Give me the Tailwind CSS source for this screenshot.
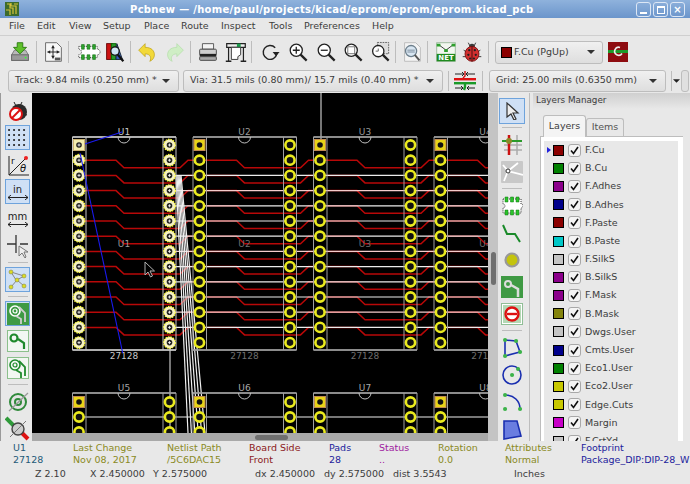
<!DOCTYPE html>
<html lang="en">

<head>
  <meta charset="UTF-8">
  <title>Pcbnew</title>
  <script src="https://cdn.jsdelivr.net/npm/@tailwindcss/browser@4"></script>
</head>

<body>
  <div class="flex flex-col w-[690px] h-[484px] overflow-hidden bg-[#e8e8e8] text-[9.5px] text-[#3c3c3c] font-['DejaVu_Sans',sans-serif]">

    <!-- title bar -->
    <div class="relative flex h-[18px] shrink-0 items-center bg-gradient-to-b from-[#8fb2dc] to-[#6b95cb]">
      <svg class="ml-[5px] size-[14px]" viewBox="0 0 14 14">
        <rect width="14" height="14" fill="#3d6b2c" />
        <path d="M2 2h3v4h3v6M6 1v3h5v8M1 8h4v5M9 2h4" stroke="#d8c43a" stroke-width="1.2" fill="none" />
      </svg>
      <div class="ml-[111px] text-[10px] font-bold tracking-[0.3px] text-white">Pcbnew — /home/paul/projects/kicad/eprom/eprom/eprom.kicad_pcb</div>
      <div class="absolute right-[5px] top-[2px] flex gap-[2px]">
        <div class="flex size-[15px] items-end justify-center rounded-[3px] border border-[#dce7f5] pb-[2px]"><div class="h-[2px] w-[7px] bg-white"></div></div>
        <div class="flex size-[15px] items-center justify-center rounded-[3px] border border-[#dce7f5]"><div class="size-[8px] border border-t-2 border-white"></div></div>
        <div class="flex size-[15px] items-center justify-center rounded-[3px] border border-[#dce7f5] text-[10px] font-bold leading-none text-white">×</div>
      </div>
    </div>

    <!-- menu bar -->
    <div class="flex h-[18px] shrink-0 items-center border-b border-[#cfcfcf] pl-[9px]">
      <span class="w-[28px]">File</span>
      <span class="w-[32px]">Edit</span>
      <span class="w-[34px]">View</span>
      <span class="w-[41px]">Setup</span>
      <span class="w-[37px]">Place</span>
      <span class="w-[40px]">Route</span>
      <span class="w-[48px]">Inspect</span>
      <span class="w-[35px]">Tools</span>
      <span class="w-[68px]">Preferences</span>
      <span>Help</span>
    </div>

    <!-- main toolbar -->
    <div class="flex h-[32px] shrink-0 items-center pl-[7px]">
      <!-- save -->
      <svg class="size-[26px] shrink-0" viewBox="-2 -2 28 28">
        <path d="M3 15l3-5h12l3 5v6H3z" fill="#b8b8b8" stroke="#777" />
        <rect x="3" y="15" width="18" height="6" fill="#9a9a9a" stroke="#666" />
        <circle cx="18" cy="18" r="1" fill="#3f3" />
        <path d="M9 2h6v5h4l-7 7-7-7h4z" fill="#5fc02a" stroke="#2c7a12" />
      </svg>
      <div class="mx-[3px] h-[22px] w-px shrink-0 bg-[#bdbdbd]"></div>
      <!-- page settings -->
      <svg class="size-[26px] shrink-0" viewBox="-2 -2 28 28">
        <path d="M4 2h12l5 5v15H4z" fill="#f7f7f7" stroke="#666" />
        <path d="M12 5v14M6 12h13" stroke="#222" />
        <path d="M12 5l-2 3h4zM12 19l-2-3h4zM6 12l3-2v4zM19 12l-3-2v4z" fill="#222" />
        <rect x="14" y="18" width="6" height="3" fill="#555" />
      </svg>
      <div class="mx-[2px] h-[22px] w-px shrink-0 bg-[#bdbdbd]"></div>
      <!-- footprint editor -->
      <svg class="ml-[4px] size-[26px] shrink-0" viewBox="-2 -2 28 28">
        <path d="M2 6h20v3a3 3 0 0 1 0 6v3H2v-3a3 3 0 0 0 0-6z" fill="#fff" stroke="#333" stroke-dasharray="1 1" />
        <path d="M5 4h3v5H5zM11 4h3v5h-3zM17 4h3v5h-3zM5 15h3v5H5zM11 15h3v5h-3zM17 15h3v5h-3z" fill="#2fa52f" stroke="#116a11" stroke-width=".6" />
      </svg>
      <!-- footprint browser -->
      <svg class="ml-[1px] size-[26px] shrink-0" viewBox="-2 -2 28 28">
        <rect x="3" y="3" width="6" height="17" fill="#c11" stroke="#600" />
        <rect x="8" y="3" width="5" height="17" fill="#2a9a2a" stroke="#060" />
        <path d="M14 3l6 17h-7z" fill="#3a5fbf" stroke="#123" />
        <circle cx="12" cy="11" r="4.5" fill="#cfe6f5" stroke="#111" stroke-width="1.3" />
        <path d="M15 15l6 7" stroke="#111" stroke-width="2.4" />
      </svg>
      <div class="mx-[2px] h-[22px] w-px shrink-0 bg-[#bdbdbd]"></div>
      <!-- undo -->
      <svg class="ml-[1px] size-[26px] shrink-0" viewBox="-2 -2 28 28">
        <path d="M3 10l7-7v4c7 0 10 4 10 8 0 3-2 6-5 7 2-3 1-8-5-8v3z" fill="#f2d93a" stroke="#b89a10" stroke-width=".7" />
      </svg>
      <!-- redo -->
      <svg class="ml-[2px] size-[26px] shrink-0" viewBox="-2 -2 28 28">
        <path d="M21 10l-7-7v4C7 7 4 11 4 15c0 3 2 6 5 7-2-3-1-8 5-8v3z" fill="#cfeec5" stroke="#b0dca6" stroke-width=".7" />
      </svg>
      <div class="mx-[2px] h-[22px] w-px shrink-0 bg-[#bdbdbd]"></div>
      <!-- print -->
      <svg class="ml-[2px] size-[26px] shrink-0" viewBox="-2 -2 28 28">
        <path d="M6 3h12v6H6z" fill="#f4f4f4" stroke="#555" />
        <rect x="3" y="9" width="18" height="6" rx="1" fill="#cfcfcf" stroke="#444" />
        <rect x="3" y="14" width="18" height="3" fill="#222" />
        <rect x="3" y="17" width="18" height="4" rx="1" fill="#aaa" stroke="#444" />
      </svg>
      <!-- plot -->
      <svg class="ml-[2px] size-[26px] shrink-0" viewBox="-2 -2 28 28">
        <path d="M2 3h20v4H2zM4 7v15M20 7v15" fill="#eee" stroke="#222" stroke-width="1.3" />
        <rect x="13" y="3" width="4" height="4" fill="#1a9a4a" />
        <path d="M7 7h10v8l-3 2v3H7z" fill="#fff" stroke="#333" />
        <path d="M1 22h6M17 22h6" stroke="#222" stroke-width="1.5" />
      </svg>
      <div class="mx-[2px] h-[22px] w-px shrink-0 bg-[#bdbdbd]"></div>
      <!-- redraw -->
      <svg class="ml-[3px] size-[26px] shrink-0" viewBox="-3 -3 30 30">
        <path d="M18 7a8 8 0 1 0 2 7" fill="none" stroke="#222" stroke-width="1.6" />
        <path d="M15 12h8l-4 5z" fill="#222" />
      </svg>
      <!-- zoom in -->
      <svg class="ml-[2px] size-[26px] shrink-0" viewBox="-3 -3 30 30">
        <circle cx="10" cy="10" r="7" fill="#fff" stroke="#222" stroke-width="1.5" />
        <path d="M6 10h8M10 6v8" stroke="#222" stroke-width="1.5" />
        <path d="M15 15l7 7" stroke="#222" stroke-width="2.6" />
      </svg>
      <!-- zoom out -->
      <svg class="ml-[2px] size-[26px] shrink-0" viewBox="-3 -3 30 30">
        <circle cx="10" cy="10" r="7" fill="#fff" stroke="#222" stroke-width="1.5" />
        <path d="M6 10h8" stroke="#222" stroke-width="1.5" />
        <path d="M15 15l7 7" stroke="#222" stroke-width="2.6" />
      </svg>
      <!-- zoom fit -->
      <svg class="ml-[1px] size-[26px] shrink-0" viewBox="-3 -3 30 30">
        <circle cx="10" cy="10" r="7" fill="#fff" stroke="#222" stroke-width="1.5" />
        <rect x="6" y="6" width="8" height="8" fill="none" stroke="#666" />
        <path d="M15 15l7 7" stroke="#222" stroke-width="2.6" />
      </svg>
      <!-- zoom area -->
      <svg class="ml-[1px] size-[26px] shrink-0" viewBox="-3 -3 30 30">
        <rect x="9" y="1" width="13" height="13" fill="#ddd" stroke="#555" stroke-dasharray="2 1" />
        <circle cx="10" cy="11" r="6.5" fill="#fff" stroke="#222" stroke-width="1.5" />
        <path d="M7 11h3V8" fill="none" stroke="#555" />
        <path d="M15 15l7 7" stroke="#222" stroke-width="2.6" />
      </svg>
      <div class="mx-[2px] h-[22px] w-px shrink-0 bg-[#bdbdbd]"></div>
      <!-- find -->
      <svg class="ml-[1px] size-[26px] shrink-0" viewBox="-2 -2 28 28">
        <path d="M4 2h12l5 5v15H4z" fill="#f4f4f4" stroke="#bbb" />
        <circle cx="11" cy="11" r="6" fill="#d8e6f2" stroke="#6d7f8c" stroke-width="1.4" />
        <path d="M7 10h8M7 12h8" stroke="#7a8a99" />
        <path d="M15 15l5 6" stroke="#555" stroke-width="2" />
      </svg>
      <div class="mx-[2px] h-[22px] w-px shrink-0 bg-[#bdbdbd]"></div>
      <!-- netlist -->
      <svg class="ml-[3px] size-[26px] shrink-0" viewBox="-2 -2 28 28">
        <rect x="2" y="2" width="20" height="20" fill="#f2f7f0" stroke="#9ab89a" />
        <path d="M4 4l8 6 8-6" stroke="#333" fill="none" />
        <path d="M2 3h4v3H2zM18 3h4v3h-4zM10 9h4v3h-4z" fill="#2da02d" />
        <rect x="2" y="14" width="20" height="8" fill="#1e8a1e" />
        <text x="12" y="21" text-anchor="middle" font-size="7.5" font-weight="700" fill="#fff" font-family="DejaVu Sans">NET</text>
      </svg>
      <!-- drc -->
      <svg class="size-[26px] shrink-0" viewBox="-2 -2 28 28">
        <path d="M8 2l2 4M16 2l-2 4M3 10l3 2M21 10l-3 2M2 17h4M22 17h-4" stroke="#333" />
        <circle cx="12" cy="6" r="3" fill="#3a3a3a" />
        <ellipse cx="12" cy="14" rx="7.5" ry="8" fill="#d22f2f" stroke="#7a1010" />
        <path d="M12 6v16" stroke="#401010" />
        <path d="M9 10h.1M15 10h.1M8 15h.1M16 15h.1M10 19h.1M14 19h.1" stroke="#222" stroke-width="2.4" stroke-linecap="round" />
      </svg>
      <div class="mx-[3px] h-[22px] w-px shrink-0 bg-[#bdbdbd]"></div>
      <!-- active layer -->
      <div class="ml-[3px] flex h-[23px] w-[108px] shrink-0 items-center rounded-[3px] border border-[#bdbdbd] bg-gradient-to-b from-[#f0f0f0] to-[#dedede] pl-[5px]">
        <div class="size-[11px] border border-black bg-[#8b0000]"></div>
        <span class="ml-[2px] flex-1">F.Cu (PgUp)</span>
        <svg class="mr-[7px] h-[4px] w-[8px]" viewBox="0 0 8 4"><path d="M0 0h8L4 4z" fill="#333" /></svg>
      </div>
      <svg class="ml-[5px] size-[20px] shrink-0" viewBox="0 0 20 20">
        <rect width="20" height="20" fill="#8e0c10" />
        <rect y="8" width="20" height="3" fill="#1d9a2a" />
        <path d="M12 5.5a4 4 0 1 0 2 6" fill="none" stroke="#eee" stroke-width="1.6" />
      </svg>
    </div>

    <!-- settings toolbar -->
    <div class="flex h-[25px] shrink-0 items-center pl-[8px]">
      <div class="flex h-[22px] w-[171px] shrink-0 items-center justify-between rounded-[3px] border border-[#bdbdbd] bg-gradient-to-b from-[#f0f0f0] to-[#dedede] pl-[6px] pr-[8px]">
        <span>Track: 9.84 mils (0.250 mm) *</span>
        <svg class="h-[4px] w-[8px]" viewBox="0 0 8 4"><path d="M0 0h8L4 4z" fill="#333" /></svg>
      </div>
      <div class="ml-[4px] flex h-[22px] w-[260px] shrink-0 items-center justify-between rounded-[3px] border border-[#bdbdbd] bg-gradient-to-b from-[#f0f0f0] to-[#dedede] pl-[6px] pr-[8px]">
        <span>Via: 31.5 mils (0.80 mm)/ 15.7 mils (0.40 mm) *</span>
        <svg class="h-[4px] w-[8px]" viewBox="0 0 8 4"><path d="M0 0h8L4 4z" fill="#333" /></svg>
      </div>
      <div class="ml-[5px] h-[20px] w-px shrink-0 bg-[#bdbdbd]"></div>
      <!-- track / via sizes icon -->
      <svg class="ml-[5px] size-[22px] shrink-0" viewBox="0 0 22 22">
        <path d="M1 4h8M13 4h8M8 2l2 2-2 2M14 2l-2 2 2 2" stroke="#222" fill="none" />
        <path d="M11 1v5l-2 2" stroke="#c11" stroke-width="1.4" fill="none" />
        <rect y="8" width="22" height="2.4" fill="#d11" />
        <rect y="12" width="22" height="2.4" fill="#1a9a2a" />
        <path d="M1 18h7M14 18h7M7 16l2 2-2 2M15 16l-2 2 2 2" stroke="#222" fill="none" />
        <path d="M11 14v3l-1 3" stroke="#1a9a2a" stroke-width="2.4" fill="none" />
      </svg>
      <div class="ml-[6px] h-[20px] w-px shrink-0 bg-[#bdbdbd]"></div>
      <div class="ml-[6px] flex h-[22px] w-[177px] shrink-0 items-center justify-between rounded-[3px] border border-[#bdbdbd] bg-gradient-to-b from-[#f0f0f0] to-[#dedede] pl-[6px] pr-[8px]">
        <span>Grid: 25.00 mils (0.6350 mm)</span>
        <svg class="h-[4px] w-[8px]" viewBox="0 0 8 4"><path d="M0 0h8L4 4z" fill="#333" /></svg>
      </div>
      <div class="ml-[5px] h-[20px] w-px shrink-0 bg-[#bdbdbd]"></div>
      <svg class="ml-[1px] h-[4px] w-[7px] shrink-0" viewBox="0 0 8 4"><path d="M0 0h8L4 4z" fill="#222" /></svg>
      <div class="ml-[1px] h-[22px] w-[8px] shrink-0 rounded-[3px] border border-[#bdbdbd] bg-[#e0e0e0]"></div>
    </div>

    <!-- work area -->
    <div class="flex h-[348px] shrink-0">

      <!-- left toolbar -->
      <div class="flex w-[32px] shrink-0 flex-col items-center border-l border-[#9a9a9a] pt-[4px] pl-[2px]">
        <div class="flex h-[27px] shrink-0 items-center justify-center">
          <svg class="size-[22px]" viewBox="0 0 22 22">
            <path d="M7 2l2 4M15 2l-2 4M19 9l-3 2M20 15l-3-1" stroke="#222" />
            <ellipse cx="12" cy="12" rx="8" ry="8" fill="#2a2a2a" />
            <circle cx="9" cy="14" r="6" fill="#fff" stroke="#d11" stroke-width="2" />
            <path d="M5 18l8-8" stroke="#d11" stroke-width="2" />
          </svg>
        </div>
        <div class="flex h-[27px] shrink-0 items-center justify-center">
          <div class="flex size-[25px] items-center justify-center border border-[#6ea3dc] bg-[#cfe0f5]">
            <svg class="size-[21px]" viewBox="0 0 21 21">
              <path d="M2 3h.1M7 3h.1M12 3h.1M17 3h.1M2 8h.1M7 8h.1M12 8h.1M17 8h.1M2 13h.1M7 13h.1M12 13h.1M17 13h.1M2 18h.1M7 18h.1M12 18h.1M17 18h.1" stroke="#222" stroke-width="2" stroke-linecap="round" />
            </svg>
          </div>
        </div>
        <div class="flex h-[27px] shrink-0 items-center justify-center">
          <svg class="size-[24px]" viewBox="0 0 24 24">
            <path d="M3 22V3M3 22h20M3 22L19 6" stroke="#222" fill="none" />
            <circle cx="20" cy="5" r="2" fill="#e22" />
            <text x="5" y="11" font-size="9" fill="#111" font-family="DejaVu Sans">r</text>
            <text x="14" y="19" font-size="10" font-style="italic" fill="#111" font-family="DejaVu Sans">θ</text>
          </svg>
        </div>
        <div class="flex h-[27px] shrink-0 items-center justify-center">
          <div class="flex size-[25px] flex-col items-center justify-center border border-[#6ea3dc] bg-[#cfe0f5] text-[10px] leading-[11px] text-[#222]">
            <span>in</span>
            <svg class="h-[5px] w-[20px]" viewBox="0 0 20 5"><path d="M0 2.5h20M3 0L0 2.5 3 5M17 0l3 2.500L17 5" stroke="#222" fill="none" /></svg>
          </div>
        </div>
        <div class="flex h-[27px] shrink-0 flex-col items-center justify-center text-[10px] leading-[11px] text-[#222]">
          <span>mm</span>
          <svg class="h-[5px] w-[20px]" viewBox="0 0 20 5"><path d="M0 2.5h20M3 0L0 2.5 3 5M17 0l3 2.500L17 5" stroke="#222" fill="none" /></svg>
        </div>
        <div class="flex h-[27px] shrink-0 items-center justify-center">
          <svg class="size-[24px]" viewBox="0 0 24 24">
            <path d="M10 1v18M1 10h9M14 10h8" stroke="#333" stroke-width="1.3" />
            <path d="M13 12v10l3-3 3 5 1-1-2-5h4z" fill="#eee" stroke="#777" />
          </svg>
        </div>
        <div class="my-[3px] h-px w-[20px] shrink-0 bg-[#bdbdbd]"></div>
        <div class="flex h-[27px] shrink-0 items-center justify-center">
          <div class="flex size-[25px] items-center justify-center border border-[#6ea3dc] bg-[#cfe0f5]">
            <svg class="size-[21px]" viewBox="0 0 21 21">
              <path d="M4 3l13 4M4 3l5 8M17 7l-7 4M4 18l6-7M17 17l-7-6" stroke="#888" />
              <circle cx="4" cy="3" r="2" fill="#dd2" stroke="#775" stroke-width=".5" />
              <circle cx="17" cy="7" r="2" fill="#dd2" stroke="#775" stroke-width=".5" />
              <circle cx="10" cy="11" r="2" fill="#dd2" stroke="#775" stroke-width=".5" />
              <circle cx="4" cy="18" r="2" fill="#dd2" stroke="#775" stroke-width=".5" />
              <circle cx="17" cy="17" r="2" fill="#dd2" stroke="#775" stroke-width=".5" />
            </svg>
          </div>
        </div>
        <div class="my-[3px] h-px w-[20px] shrink-0 bg-[#bdbdbd]"></div>
        <div class="flex h-[27px] shrink-0 items-center justify-center">
          <div class="flex size-[25px] items-center justify-center border border-[#6ea3dc] bg-[#cfe0f5]">
            <svg class="size-[22px]" viewBox="0 0 22 22">
              <rect width="22" height="22" fill="#3f9a44" />
              <circle cx="8" cy="8" r="5" fill="none" stroke="#fff" stroke-width="1.6" />
              <circle cx="8" cy="8" r="2" fill="none" stroke="#fff" stroke-width="1.2" />
              <path d="M12 4l6 6v9M9 13l5 3v5" fill="none" stroke="#cfcfcf" stroke-width="1.8" />
            </svg>
          </div>
        </div>
        <div class="flex h-[27px] shrink-0 items-center justify-center">
          <svg class="size-[22px]" viewBox="0 0 22 22">
            <rect x=".5" y=".5" width="21" height="21" fill="#f2f7f2" stroke="#8cc08c" />
            <circle cx="7" cy="8" r="3.500" fill="none" stroke="#1f8a2c" stroke-width="2.2" />
            <path d="M11 9l6 4v6" fill="none" stroke="#1f8a2c" stroke-width="2.2" />
          </svg>
        </div>
        <div class="flex h-[27px] shrink-0 items-center justify-center">
          <svg class="size-[22px]" viewBox="0 0 22 22">
            <rect x=".5" y=".5" width="21" height="21" fill="#f2f7f2" stroke="#8cc08c" />
            <circle cx="8" cy="8" r="5" fill="none" stroke="#1f8a2c" stroke-width="1.6" />
            <circle cx="8" cy="8" r="2" fill="none" stroke="#1f8a2c" stroke-width="1.2" />
            <path d="M12 4l6 6v9M9 13l5 3v5" fill="none" stroke="#1f8a2c" stroke-width="1.8" />
          </svg>
        </div>
        <div class="my-[3px] h-px w-[20px] shrink-0 bg-[#bdbdbd]"></div>
        <div class="flex h-[27px] shrink-0 items-center justify-center">
          <svg class="size-[24px]" viewBox="0 0 24 24">
            <circle cx="12" cy="12" r="8" fill="#e4e4e4" stroke="#2f8a3a" stroke-width="2" />
            <circle cx="12" cy="12" r="3" fill="none" stroke="#2f8a3a" stroke-width="2" />
            <path d="M3 21L22 3" stroke="#999" stroke-width="1.2" />
          </svg>
        </div>
        <div class="flex h-[27px] shrink-0 items-center justify-center">
          <svg class="size-[26px]" viewBox="0 0 26 26">
            <path d="M1 2l11 11" stroke="#2f9a3a" stroke-width="4" />
            <path d="M13 13l10 10" stroke="#d11" stroke-width="4" />
            <circle cx="13" cy="13" r="6" fill="#ccc" stroke="#444" stroke-width="1.4" />
            <path d="M5 21l16-16" stroke="#777" />
          </svg>
        </div>
      </div>

      <!-- canvas and its scrollbar -->
      <div class="flex w-[456px] shrink-0 flex-col">
        <svg id="board" class="block h-[340px] w-[456px] bg-black" viewBox="32 93 456 340" font-family="DejaVu Sans"></svg>
        <div class="flex h-[8px] shrink-0 items-center bg-[#a9a9a9] pl-[223px]">
          <div class="h-[5px] w-[33px] rounded-full bg-[#6f6f6f]"></div>
        </div>
      </div>

      <!-- vertical scrollbar -->
      <div class="flex w-[10px] shrink-0 justify-center bg-[#c4c4c4] pt-[159px]">
        <div class="h-[33px] w-[5px] rounded-full bg-[#6f6f6f]"></div>
      </div>

      <!-- right toolbar -->
      <div class="flex w-[32px] shrink-0 flex-col items-center border-r border-[#bdbdbd] pt-[4px] pr-[3px]">
        <div class="flex h-[27px] shrink-0 items-center justify-center">
          <div class="flex size-[26px] items-center justify-center border border-[#6ea3dc] bg-[#cfe0f5]">
            <svg class="size-[18px]" viewBox="0 0 18 18"><path d="M4 1v14l4-3 3 6 2-1-3-6h5z" fill="#eee" stroke="#333" stroke-width="1.200" /></svg>
          </div>
        </div>
        <div class="my-[3px] h-px w-[20px] shrink-0 bg-[#bdbdbd]"></div>
        <div class="flex h-[27px] shrink-0 items-center justify-center">
          <svg class="size-[22px]" viewBox="0 0 22 22">
            <path d="M16 1v20M3 11h18M3 16h18" stroke="#aaa" stroke-width="1.500" />
            <path d="M8 1v20" stroke="#c11" stroke-width="2.500" />
            <path d="M1 7h20" stroke="#2a9a2a" stroke-width="2" />
            <circle cx="8" cy="7" r="3" fill="#8a8a2a" />
          </svg>
        </div>
        <div class="flex h-[27px] shrink-0 items-center justify-center">
          <svg class="size-[22px]" viewBox="0 0 22 22">
            <rect width="22" height="22" rx="1" fill="#c8c8c8" />
            <path d="M7 10L17 2M7 10l15 4M7 10L3 20M7 10L2 4" stroke="#fff" stroke-width="1.800" />
            <circle cx="7" cy="10" r="2" fill="#fff" stroke="#333" />
          </svg>
        </div>
        <div class="my-[3px] h-px w-[20px] shrink-0 bg-[#bdbdbd]"></div>
        <div class="flex h-[27px] shrink-0 items-center justify-center">
          <svg class="size-[22px]" viewBox="0 0 22 22">
            <path d="M2 4h18v5a2 2 0 0 1 0 4v5H2v-5a2 2 0 0 0 0-4z" fill="#fff" stroke="#333" stroke-dasharray="1 1" />
            <path d="M4 2h3v5H4zM9.500 2h3v5h-3zM15 2h3v5h-3zM4 15h3v5H4zM9.500 15h3v5h-3zM15 15h3v5h-3z" fill="#2bc42b" stroke="#117711" stroke-width=".5" />
          </svg>
        </div>
        <div class="flex h-[27px] shrink-0 items-center justify-center">
          <svg class="size-[22px]" viewBox="0 0 22 22"><path d="M2 3l4 9h8l5 8" fill="none" stroke="#1a8a2a" stroke-width="2" /></svg>
        </div>
        <div class="flex h-[27px] shrink-0 items-center justify-center">
          <svg class="size-[22px]" viewBox="0 0 22 22"><circle cx="11" cy="11" r="6.500" fill="#c4c40c" stroke="#999" stroke-width="2.200" /></svg>
        </div>
        <div class="flex h-[27px] shrink-0 items-center justify-center">
          <svg class="size-[22px]" viewBox="0 0 22 22">
            <rect width="22" height="22" fill="#3f9a44" />
            <circle cx="7" cy="8" r="3" fill="none" stroke="#ddd" stroke-width="2" />
            <path d="M10 9l7 4v8" fill="none" stroke="#ddd" stroke-width="2.500" />
          </svg>
        </div>
        <div class="flex h-[27px] shrink-0 items-center justify-center">
          <svg class="size-[22px]" viewBox="0 0 22 22">
            <rect x=".5" y=".5" width="21" height="21" fill="#fff" stroke="#2f8a3a" stroke-dasharray="1 1" />
            <rect x="2" y="2" width="18" height="18" fill="#58a85c" opacity=".45" />
            <circle cx="11" cy="11" r="6.500" fill="#fff" stroke="#d11" stroke-width="2.400" />
            <path d="M6 11h10" stroke="#d11" stroke-width="2.400" />
          </svg>
        </div>
        <div class="my-[3px] h-px w-[20px] shrink-0 bg-[#bdbdbd]"></div>
        <div class="flex h-[27px] shrink-0 items-center justify-center">
          <svg class="size-[22px]" viewBox="0 0 22 22">
            <path d="M4 3l11 1 4 11-15 4z" fill="none" stroke="#1a2fb0" stroke-width="1.600" />
            <path d="M4 3h.1M15 4h.1M19 15h.1M4 19h.1" stroke="#3cb34a" stroke-width="4" stroke-linecap="round" />
          </svg>
        </div>
        <div class="flex h-[27px] shrink-0 items-center justify-center">
          <svg class="size-[22px]" viewBox="0 0 22 22">
            <circle cx="11" cy="11" r="9" fill="none" stroke="#1a2fb0" stroke-width="1.600" />
            <path d="M11 11h.1M17 5h.1" stroke="#3cb34a" stroke-width="4" stroke-linecap="round" />
          </svg>
        </div>
        <div class="flex h-[27px] shrink-0 items-center justify-center">
          <svg class="size-[22px]" viewBox="0 0 22 22">
            <path d="M4 4c9 0 15 6 15 14" fill="none" stroke="#1a2fb0" stroke-width="1.600" />
            <path d="M4 4h.1M19 18h.1M4 18h.1" stroke="#3cb34a" stroke-width="4" stroke-linecap="round" />
          </svg>
        </div>
        <div class="flex h-[27px] shrink-0 items-center justify-center">
          <svg class="size-[22px]" viewBox="0 0 22 22"><path d="M3 3h13l4 15-17 3z" fill="#6a7de0" stroke="#1a2fb0" stroke-width="1.600" /></svg>
        </div>
      </div>

      <!-- layers manager -->
      <div class="flex min-w-0 flex-1 flex-col pl-[3px]">
        <div class="flex h-[16px] shrink-0 items-center bg-gradient-to-b from-[#cfcfcf] to-[#e8e8e8] pl-[3px] text-[8.8px]">Layers Manager</div>
        <div class="flex h-[27px] shrink-0 items-end pl-[10px]">
          <div class="relative z-10 flex h-[22px] w-[43px] -mb-px items-center justify-center rounded-t-[3px] border border-b-0 border-[#bdbdbd] bg-[#f4f4f4]">Layers</div>
          <div class="flex h-[18px] w-[38px] items-center justify-center rounded-t-[3px] border border-b-0 border-[#bdbdbd] bg-[#e8e8e8] text-[#555]">Items</div>
        </div>
        <div class="ml-[7px] w-[143px] flex-1 overflow-hidden border-l border-t border-[#bdbdbd] bg-white pl-[3px] pr-[5px] pt-[4px]">
          <div id="layers" class="flex h-full flex-col bg-[#e8e8e8]"></div>
        </div>
      </div>
    </div>

    <!-- message panel -->
    <div class="relative z-10 flex h-[27px] shrink-0 flex-col bg-[#e8e8e8] pt-[1px] leading-[12px]">
      <div class="flex h-[26px] overflow-hidden whitespace-nowrap">
        <div class="w-[73px] pl-[13px] text-[#1e5a78]"><div>U1</div><div>27128</div></div>
        <div class="w-[94px] text-[#8a8a24]"><div>Last Change</div><div>Nov 08, 2017</div></div>
        <div class="w-[82px] text-[#8a8a24]"><div>Netlist Path</div><div>/5C6DAC15</div></div>
        <div class="w-[80px] text-[#8b1a1a]"><div>Board Side</div><div>Front</div></div>
        <div class="w-[50px] text-[#1c1c9c]"><div>Pads</div><div>28</div></div>
        <div class="w-[59px] text-[#a020a0]"><div>Status</div><div>..</div></div>
        <div class="w-[67px] text-[#8a8a24]"><div>Rotation</div><div>0.0</div></div>
        <div class="w-[76px] text-[#8a8a24]"><div>Attributes</div><div>Normal</div></div>
        <div class="text-[#1c1c9c]"><div>Footprint</div><div>Package_DIP:DIP-28_W</div></div>
      </div>
    </div>
    <div class="flex h-[13px] shrink-0 items-center whitespace-nowrap">
      <span class="ml-[35px] w-[55px]">Z 2.10</span>
      <span class="w-[63px]">X 2.450000</span>
      <span class="w-[102px]">Y 2.575000</span>
      <span class="w-[69px]">dx 2.450000</span>
      <span class="w-[69px]">dy 2.575000</span>
      <span class="w-[121px]">dist 3.5543</span>
      <span>Inches</span>
    </div>
  </div>

  <script>
    // layer list on the right
    const layers = [
      ['F.Cu', '#8b0000'], ['B.Cu', '#008000'], ['F.Adhes', '#8b008b'], ['B.Adhes', '#00008b'],
      ['F.Paste', '#8b0000'], ['B.Paste', '#00c8c8'], ['F.SilkS', '#c4c4c4'], ['B.SilkS', '#8b008b'],
      ['F.Mask', '#8b008b'], ['B.Mask', '#84840c'], ['Dwgs.User', '#c4c4c4'], ['Cmts.User', '#00008b'],
      ['Eco1.User', '#008000'], ['Eco2.User', '#c8c800'], ['Edge.Cuts', '#c8c800'], ['Margin', '#c800c8'],
      ['F.CrtYd', '#c4c4c4']
    ];
    document.getElementById('layers').innerHTML = layers.map((l, i) => `
      <div style="height:18.2px" class="flex shrink-0 items-center">
        <svg class="ml-[3px] mr-[2px] h-[6px] w-[4px]" viewBox="0 0 4 6">${i === 0 ? '<path d="M0 0l4 3-4 3z" fill="#2222dd"/>' : ''}</svg>
        <div class="h-[11px] w-[11px] border border-black" style="background:${l[1]}"></div>
        <div class="ml-[4px] flex h-[13px] w-[13px] items-center justify-center rounded-[3px] border border-[#a8a8a8] bg-[#f4f4f4]">
          <svg class="h-[9px] w-[9px]" viewBox="0 0 9 9"><path d="M1 4.500l2.500 3L8 1" fill="none" stroke="#111" stroke-width="1.600"/></svg>
        </div>
        <span class="ml-[4px]">${l[0]}</span>
      </div>`).join('');

    // pcb drawing, coordinates are window pixels
    const colX = [79, 199.5, 320, 440.5];
    const rowsTop = 145, pitch = 15.2;
    let g = '';

    function pad(x, y, first, selected) {
      if (selected) {
        let s = first
          ? `<rect x="${x - 5.5}" y="${y - 5.5}" width="11" height="11" fill="#f4eeb0" stroke="#c8b070"/>`
          : `<circle cx="${x}" cy="${y}" r="5.800" fill="#f6f2c4" stroke="#ffff33" stroke-width="1.200" stroke-dasharray="1.500 1"/>`;
        return s + `<circle cx="${x}" cy="${y}" r="2.800" fill="#222"/><path d="M${x - 1.5} ${y}h3M${x} ${y - 1.5}v3" stroke="#fff" stroke-width=".8"/>`;
      }
      if (first) {
        return `<rect x="${x - 5.5}" y="${y - 5.5}" width="11" height="11" fill="#e8d418" stroke="#c08a50"/><circle cx="${x}" cy="${y}" r="2.800" fill="#111"/>`;
      }
      return `<circle cx="${x}" cy="${y}" r="4.600" fill="#111" stroke="#eaea1e" stroke-width="2.600"/>`;
    }

    function outline(x, top, bottom, bright) {
      const c = bright ? '#c8c8c8' : '#a0a0a0';
      let s = `<path d="M${x - 6.5} ${top}H${x + 97}V${bottom}H${x - 6.5}Z M${x + 7} ${top}V${bottom}M${x + 84} ${top}V${bottom}" fill="none" stroke="${c}"/>`;
      s += `<path d="M${x - 6.5} ${top}H${x + 97}M${x - 6.5} ${bottom}H${x + 97}" stroke="${c}" stroke-width="1.600"/>`;
      s += `<path d="M${x + 39} ${top}a6 6 0 0 0 12 0" fill="none" stroke="#c0c0c0"/>`;
      return s;
    }

    // red tracks, left pin across to the next part
    colX.forEach((x) => {
      for (let i = 1; i < 13; i++) {
        const y = rowsTop + i * pitch;
        g += `<path d="M${x} ${y}H${x + 37}l8 7.500H${x + 101}l8 -7.500H${x + 120}" fill="none" stroke="#b80808" stroke-width="1.500"/>`;
      }
    });

    // white ratsnest
    for (let i = 2; i < 13; i++) {
      const y = rowsTop + i * pitch;
      g += `<path d="M169 ${y}H488" stroke="${i % 4 === 3 ? '#f4cccc' : '#ececec'}" stroke-width="1.200"/>`;
    }
    for (let i = 0; i < 6; i++) {
      g += `<path d="M${176 + i} 175L${188 + i * 3.4} 433" stroke="#f0f0f0" stroke-width="1.200"/>`;
    }
    g += `<path d="M321 93V145M170 342V433M79 417H488" stroke="#ececec"/>`;

    // top row of parts
    colX.forEach((x, n) => {
      g += outline(x, 137, 350, n === 0);
      for (let i = 0; i < 14; i++) {
        const y = rowsTop + i * pitch;
        g += pad(x, y, i === 0, n === 0);
        g += pad(x + 90.5, y, false, n === 0);
      }
      const dim = '#6e6e6e';
      g += `<text x="${x + 45}" y="135" text-anchor="middle" font-size="9" fill="${n === 0 ? '#c8c8c8' : '#9a9a9a'}">U${n + 1}</text>`;
      g += `<text x="${x + 45}" y="247" text-anchor="middle" font-size="9" fill="${n === 0 ? '#9a9a9a' : dim}">U${n + 1}</text>`;
      g += `<text x="${x + 45}" y="359" text-anchor="middle" font-size="9" fill="${n === 0 ? '#c8c8c8' : dim}">27128</text>`;
    });

    // bottom row of parts
    colX.forEach((x, n) => {
      g += outline(x, 393, 460, false);
      [402, 417, 432].forEach((y, i) => {
        g += pad(x, y, i === 0, false);
        g += pad(x + 90.5, y, false, false);
      });
      g += `<text x="${x + 45}" y="391" text-anchor="middle" font-size="9" fill="#a8a8a8">U${n + 5}</text>`;
    });

    // blue traces on U1 and the mouse pointer
    g += `<path d="M80 153L86 181L122.700 353M85 144L122 132" fill="none" stroke="#1a1aee" stroke-width="1.100"/>`;
    g += `<path d="M145 262v13l3-3 2.500 5 2-1-2.500-5h4.500z" fill="#000" stroke="#b0b0b0"/>`;

    document.getElementById('board').innerHTML = g;
  </script>
</body>

</html>
